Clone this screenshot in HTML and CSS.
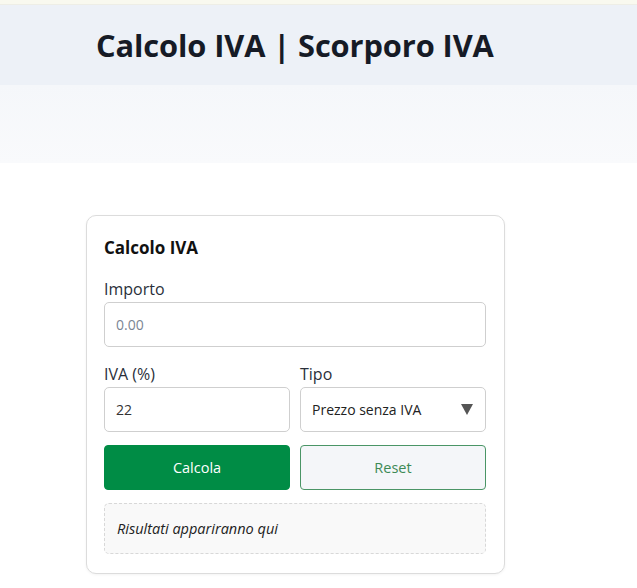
FILE: index.html
```html
<!DOCTYPE html>
<html lang="it">
<head>
<meta charset="utf-8">
<title>Calcolo IVA</title>
<link rel="stylesheet" href="styles.css">
</head>
<body>
<div class="topline"></div>
<header class="site-header">
  <h1>Calcolo IVA | Scorporo IVA</h1>
</header>
<div class="band"></div>
<main class="main">
  <section class="card">
    <h2>Calcolo IVA</h2>
    <label class="field">
      <span class="label">Importo</span>
      <input class="input" type="text" placeholder="0.00">
    </label>
    <div class="row">
      <label class="field">
        <span class="label">IVA (%)</span>
        <input class="input" type="text" value="22">
      </label>
      <label class="field">
        <span class="label">Tipo</span>
        <div class="select">
          <span>Prezzo senza IVA</span>
          <svg class="caret" width="12" height="11" viewBox="0 0 12 11"><path d="M0 0H12L6 11Z" fill="#555"/></svg>
        </div>
      </label>
    </div>
    <div class="row buttons">
      <button class="btn primary">Calcola</button>
      <button class="btn secondary">Reset</button>
    </div>
    <div class="result">Risultati appariranno qui</div>
  </section>
</main>
</body>
</html>
```
FILE: styles.css
```css
* { box-sizing: border-box; }
html, body { margin: 0; padding: 0; background: #fff; }
body { font-family: "Open Sans", "Noto Sans", sans-serif; color: #1a1f2b; }
.topline { height: 5px; background: #f9f9ef; border-bottom: 1px solid #eeeee6; }
.site-header { background: #edf1f7; height: 80px; display: flex; align-items: center; padding-left: 96px; }
.site-header h1 { margin: 0; font-size: 30.8px; font-weight: 700; color: #161b26; letter-spacing: -0.1px; }
.band { height: 78px; background: linear-gradient(#f5f7fa, #f9fafc); }
.main { padding: 52px 0 20px 86px; }
.card { width: 419px; border: 1px solid #dcdcdc; border-radius: 10px; padding: 20px 18px 19px 17px; background: #fff; box-shadow: 0 1px 3px rgba(0,0,0,0.05); }
.card h2 { margin: 0 0 18px; font-size: 17px; font-weight: 700; color: #111; line-height: 24px; }
.field { display: flex; flex-direction: column; min-width: 0; }
.label { font-size: 16px; line-height: 22px; color: #2a2f3a; margin-bottom: 2px; }
.input { width: 100%; height: 45px; border: 1px solid #cfcfcf; border-radius: 5px; padding: 0 11px; font: inherit; font-size: 14px; color: #333; background: #fff; }
.input::placeholder { color: #7b8594; }
.row { display: grid; grid-template-columns: minmax(0, 1fr) minmax(0, 1fr); gap: 10px; margin-top: 16px; }
.select { height: 45px; border: 1px solid #cfcfcf; border-radius: 5px; padding: 0 11px; display: flex; align-items: center; justify-content: space-between; font-size: 14px; color: #222; }
.caret { margin-right: 1px; }
.buttons { margin-top: 13px; }
.btn { height: 45px; border-radius: 4px; font: inherit; font-size: 14.5px; }
.primary { background: #008c45; color: #fff; border: 1px solid #008c45; }
.secondary { background: #f4f6f9; color: #3d8a56; border: 1px solid #4a9566; }
.result { margin-top: 13px; height: 51px; border: 1px dashed #d8d8d8; border-radius: 5px; background: #f9f9f9; display: flex; align-items: center; padding: 0 12px; font-style: italic; font-size: 14.5px; color: #222; }
```
